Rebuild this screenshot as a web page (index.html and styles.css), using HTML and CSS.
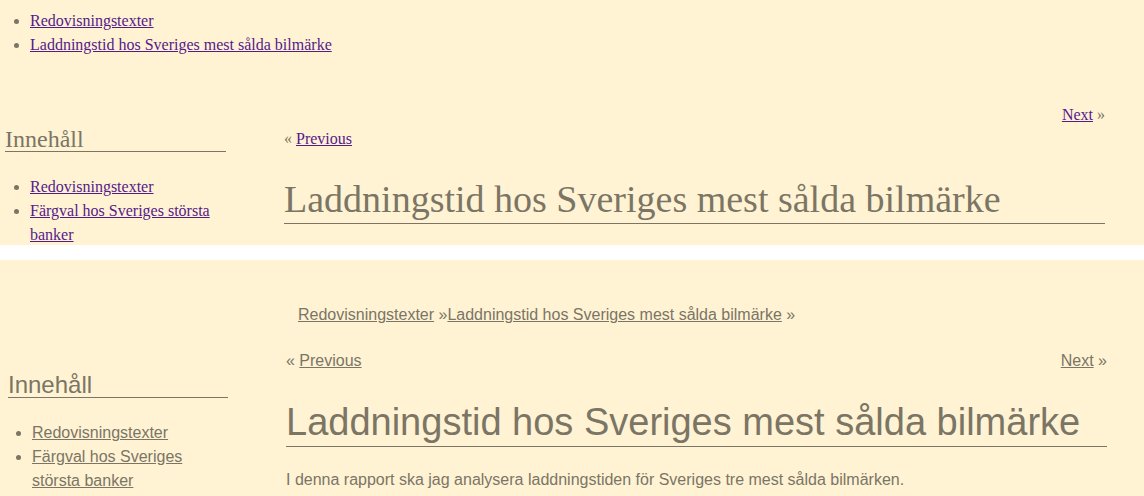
FILE: index.html
```html
<!DOCTYPE html>
<html lang="sv">
<head>
<meta charset="utf-8">
<title>Laddningstid hos Sveriges mest sålda bilmärke</title>
<link rel="stylesheet" href="styles.css">
</head>
<body>
<section class="panel panel-serif">
  <ul class="top-links">
    <li><a href="#">Redovisningstexter</a></li>
    <li><a href="#">Laddningstid hos Sveriges mest sålda bilmärke</a></li>
  </ul>
  <div class="layout layout-serif">
    <aside class="side side-serif">
      <h2 class="side-title">Innehåll</h2>
      <ul class="side-links">
        <li><a href="#">Redovisningstexter</a></li>
        <li><a href="#">Färgval hos Sveriges största banker</a></li>
      </ul>
    </aside>
    <main class="content">
      <div class="next-line">
        <a href="#">Next</a> »
      </div>
      <div class="prev-line">« <a href="#">Previous</a></div>
      <h1 class="title title-serif">Laddningstid hos Sveriges mest sålda bilmärke</h1>
    </main>
  </div>
</section>
<div class="gap-band"></div>
<section class="panel panel-sans">
  <div class="layout layout-sans">
    <aside class="side side-sans">
      <h2 class="side-title">Innehåll</h2>
      <ul class="side-links">
        <li><a href="#">Redovisningstexter</a></li>
        <li><a href="#">Färgval hos Sveriges största banker</a></li>
      </ul>
    </aside>
    <main class="content">
      <div class="crumbs"><a href="#">Redovisningstexter</a> »<a href="#">Laddningstid hos Sveriges mest sålda bilmärke</a> »</div>
      <div class="pager">
        <span>« <a href="#">Previous</a></span>
        <span><a href="#">Next</a> »</span>
      </div>
      <h1 class="title title-sans">Laddningstid hos Sveriges mest sålda bilmärke</h1>
      <p class="lead">I denna rapport ska jag analysera laddningstiden för Sveriges tre mest sålda bilmärken.</p>
    </main>
  </div>
</section>
</body>
</html>
```

FILE: styles.css
```css
html, body {
  margin: 0;
  padding: 0;
  background: #ffffff;
}

.panel {
  background: #fff3d3;
  color: #7b7566;
  font-size: 16px;
  line-height: 24px;
  overflow: hidden;
}

.panel-serif {
  height: 245px;
  font-family: "Liberation Serif", "Times New Roman", serif;
}

.panel-serif a {
  color: #551a8b;
}

.panel-sans {
  height: 236px;
  font-family: "Liberation Sans", Arial, sans-serif;
}

.panel-sans a {
  color: #7b7566;
}

.gap-band {
  height: 15px;
  background: #ffffff;
}

.top-links {
  margin: 0;
  padding: 9px 0 0 30px;
}

.layout {
  display: flex;
  align-items: flex-start;
}

.layout-serif {
  margin-top: 46px;
  padding-left: 5px;
}

.layout-sans {
  padding-left: 8px;
}

.side {
  flex: none;
}

.side-serif {
  width: 221px;
  margin-top: 24px;
}

.side-sans {
  width: 220px;
  margin-top: 113px;
}

.side-title {
  margin: 0;
  font-size: 24px;
  line-height: 24px;
  font-weight: normal;
  border-bottom: 1px solid #7b7566;
}

.side-links {
  margin: 23px 0 0;
  padding-left: 25px;
}

.side-sans .side-links {
  padding-left: 24px;
}

.content {
  flex: none;
  width: 821px;
  margin-left: 58px;
}

.next-line {
  text-align: right;
}

.title {
  margin: 0;
  font-size: 38px;
  line-height: 44px;
  font-weight: normal;
  border-bottom: 1px solid #7b7566;
}

.title-serif {
  margin-top: 26px;
  padding-bottom: 2px;
}

.crumbs {
  margin-top: 43px;
  padding-left: 12px;
}

.pager {
  display: flex;
  justify-content: space-between;
  margin-top: 22px;
}

.title-sans {
  margin-top: 27px;
  padding-bottom: 2px;
}

.lead {
  margin: 21px 0 0;
}
```
